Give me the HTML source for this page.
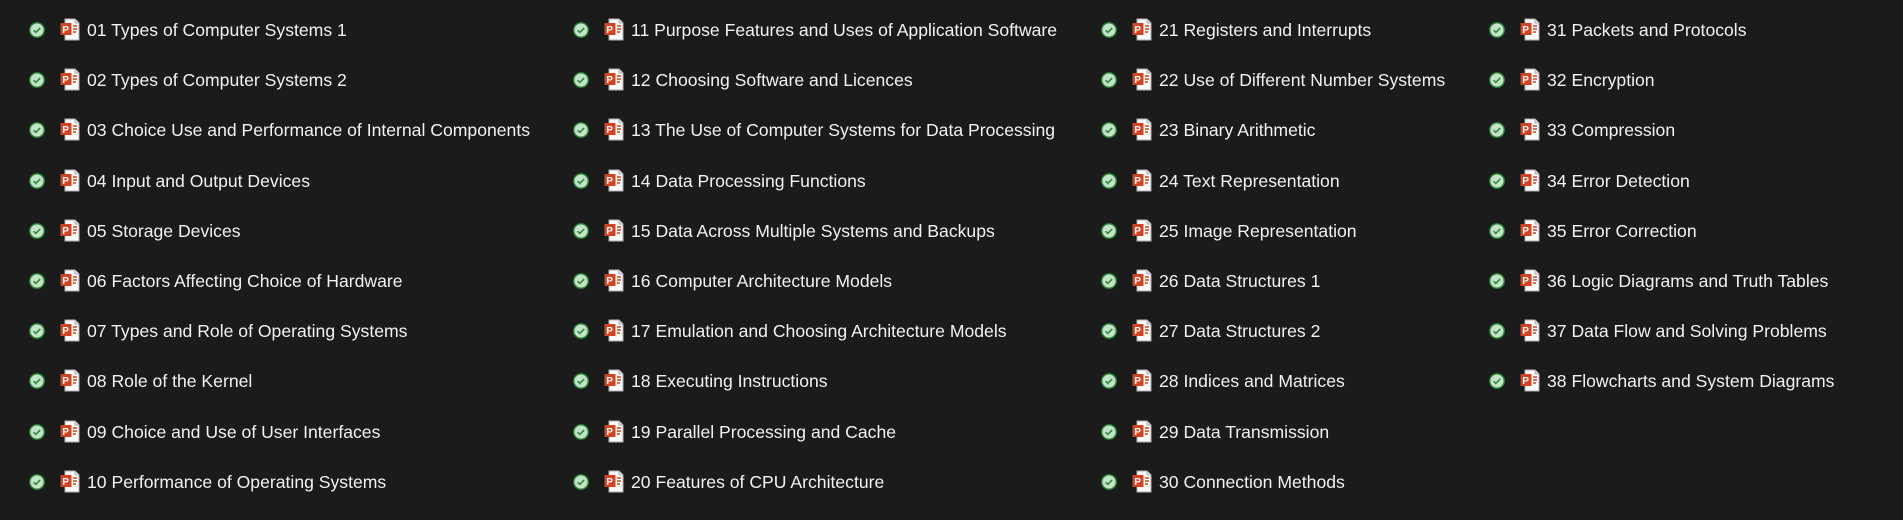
<!DOCTYPE html>
<html><head><meta charset="utf-8"><style>
html,body{margin:0;padding:0;background:#1b1b1b;width:1903px;height:520px;overflow:hidden}
.col{position:absolute;top:0}
.row{position:absolute;left:0;height:50px;white-space:nowrap}
.chk{position:absolute;left:2px;top:22px}
.doc{position:absolute;left:33px;top:18px}
.t{position:absolute;left:60px;top:18px;font-family:"Liberation Sans",sans-serif;font-size:17.6px;color:#f2f2f2;line-height:24px}
</style></head><body>
<div id="c"></div>
<script>
var cols=[[27,["01 Types of Computer Systems 1","02 Types of Computer Systems 2","03 Choice Use and Performance of Internal Components","04 Input and Output Devices","05 Storage Devices","06 Factors Affecting Choice of Hardware","07 Types and Role of Operating Systems","08 Role of the Kernel","09 Choice and Use of User Interfaces","10 Performance of Operating Systems"]],
[571,["11 Purpose Features and Uses of Application Software","12 Choosing Software and Licences","13 The Use of Computer Systems for Data Processing","14 Data Processing Functions","15 Data Across Multiple Systems and Backups","16 Computer Architecture Models","17 Emulation and Choosing Architecture Models","18 Executing Instructions","19 Parallel Processing and Cache","20 Features of CPU Architecture"]],
[1099,["21 Registers and Interrupts","22 Use of Different Number Systems","23 Binary Arithmetic","24 Text Representation","25 Image Representation","26 Data Structures 1","27 Data Structures 2","28 Indices and Matrices","29 Data Transmission","30 Connection Methods"]],
[1487,["31 Packets and Protocols","32 Encryption","33 Compression","34 Error Detection","35 Error Correction","36 Logic Diagrams and Truth Tables","37 Data Flow and Solving Problems","38 Flowcharts and System Diagrams"]]];
var chk='<svg class="chk" width="16" height="16" viewBox="0 0 16 16"><circle cx="8" cy="8" r="7.2" fill="#c5e3c8" stroke="#2e8b3a" stroke-width="1.4"/><path d="M4.6 8.2l2.2 2.2 4.4-4.4" fill="none" stroke="#2e8b3a" stroke-width="1.6"/></svg>';
var doc='<svg class="doc" width="20" height="23" viewBox="0 0 20 23"><path d="M5 1h10l4 4v17H5z" fill="#fafafa" stroke="#b0b0b0" stroke-width="1"/><path d="M15 1v4h4" fill="#ddd" stroke="#b0b0b0" stroke-width="1"/><rect x="0.5" y="5" width="11" height="12" fill="#d04423"/><text x="2.3" y="15" font-family="Liberation Sans,sans-serif" font-size="10" font-weight="bold" fill="#fff">P</text><path d="M13 8h4M13 11h4M13 14h3" stroke="#d04423" stroke-width="1.5"/></svg>';
var h='';
cols.forEach(function(c){h+='<div class="col" style="left:'+c[0]+'px">';c[1].forEach(function(s,i){h+='<div class="row" style="top:'+(i*50.2)+'px">'+chk+doc+'<span class="t">'+s+'</span></div>';});h+='</div>';});
document.getElementById('c').innerHTML=h;
</script>
</body></html>
